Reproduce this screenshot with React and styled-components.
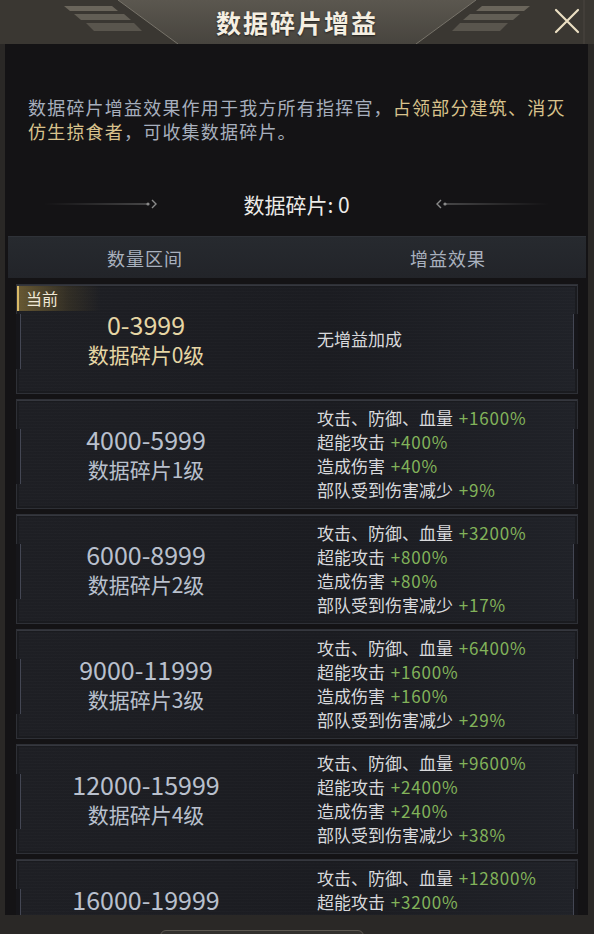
import styled, { createGlobalStyle } from "styled-components";

const GlobalStyle = createGlobalStyle`
  html, body {
    margin: 0;
    padding: 0;
    background: #141315;
  }
  body {
    font-family: "Noto Sans CJK SC", "Noto Sans", sans-serif;
  }
`;

const Panel = styled.div`
  width: 594px;
  height: 934px;
  display: flex;
  flex-direction: column;
  overflow: hidden;
  background: #141315;
`;

const Header = styled.div`
  position: relative;
  flex: none;
  height: 44px;
  box-sizing: border-box;
  display: flex;
  align-items: center;
  justify-content: center;
  background: linear-gradient(180deg, #403d37 0%, #34312d 100%);
  border-bottom: 1px solid #56524a;
`;

const HeaderArt = styled.svg`
  position: absolute;
  left: 0;
  top: 0;
`;

const Title = styled.h1`
  position: relative;
  margin: 0;
  font-size: 25px;
  font-weight: 700;
  letter-spacing: 2px;
  color: #f5efe2;
  text-shadow: 0 1px 2px rgba(0, 0, 0, 0.6);
`;

const Body = styled.div`
  flex: 1;
  min-height: 0;
  display: flex;
  flex-direction: column;
  border-left: 5px solid #2a2826;
  border-right: 6px solid #2a2826;
`;

const Description = styled.p`
  margin: 51px 0 0;
  padding: 0 6px 0 23px;
  font-size: 18px;
  line-height: 24px;
  letter-spacing: 1.2px;
  color: #a7afbd;
  white-space: nowrap;
  span {
    color: #d8c28c;
  }
`;

const Counter = styled.div`
  margin-top: 46px;
  height: 30px;
  display: flex;
  align-items: center;
  justify-content: center;
  gap: 84px;
`;

const CounterText = styled.div`
  font-size: 21px;
  color: #ecebe8;
  white-space: nowrap;
`;

const TableHeader = styled.div`
  margin: 17px 2px 0 3px;
  height: 42px;
  display: grid;
  grid-template-columns: 274px 1fr;
  align-items: center;
  background: linear-gradient(180deg, #272a2f, #222429);
  border-top: 1px solid #2f3238;
  box-sizing: border-box;
  color: #a9b1be;
  font-size: 18px;
  letter-spacing: 1px;
`;

const HeadCell = styled.div`
  text-align: center;
  padding-left: ${(p) => (p.$right ? "28px" : "0")};
`;

const List = styled.div`
  flex: 1;
  min-height: 0;
  overflow: hidden;
  padding: 6px 10px 0 11px;
  display: flex;
  flex-direction: column;
  gap: 5px;
`;

const Row = styled.div`
  position: relative;
  flex: none;
  height: 110px;
  box-sizing: border-box;
  display: grid;
  grid-template-columns: 258px 1fr;
  align-items: center;
  background:
    repeating-linear-gradient(180deg, rgba(255, 255, 255, 0.012) 0 1px, transparent 1px 3px),
    linear-gradient(90deg, #1e1f24 0%, #1b1c21 55%, #202228 100%);
  border: 1px solid #2e3036;
  box-shadow: inset 0 1px 0 #35373e, inset 0 0 0 2px #1a1b1f;

  &::before,
  &::after {
    content: "";
    position: absolute;
    top: 29px;
    height: 55px;
    width: 4px;
    background: #16161a;
  }
  &::before {
    left: -1px;
    border-right: 1px solid #444754;
  }
  &::after {
    right: -1px;
    border-left: 1px solid #444754;
  }
`;

const Badge = styled.div`
  position: absolute;
  left: 0;
  top: 1px;
  width: 84px;
  height: 25px;
  box-sizing: border-box;
  padding-left: 7px;
  border-left: 2px solid #d9b967;
  background: linear-gradient(90deg, rgba(150, 125, 60, 0.6), rgba(95, 80, 40, 0.3) 60%, transparent);
  color: #efe8d6;
  font-size: 16px;
  line-height: 25px;
  z-index: 1;
`;

const Level = styled.div`
  display: flex;
  flex-direction: column;
  align-items: center;
  color: ${(p) => (p.$current ? "#e6d6a5" : "#b9c0cd")};
`;

const Range = styled.div`
  font-size: 25px;
  line-height: 30px;
`;

const LevelName = styled.div`
  font-size: 21px;
  line-height: 30px;
`;

const Effects = styled.div`
  padding-left: 42px;
  font-size: 17px;
  line-height: 24px;
  color: #d8d9dc;
  white-space: nowrap;
`;

const Bonus = styled.span`
  margin-left: 2px;
  letter-spacing: 0.8px;
  color: #82b35a;
`;

const Footer = styled.div`
  flex: none;
  height: 19px;
  overflow: hidden;
  background: #2a2826;
  padding-left: 160px;
`;

const FooterButton = styled.div`
  margin-top: 15px;
  width: 204px;
  height: 40px;
  box-sizing: border-box;
  border: 1px solid #5c5851;
  border-radius: 6px;
  background: #33312e;
`;

const rows = [
  { range: "0-3999", name: "数据碎片0级", current: true, effects: null },
  { range: "4000-5999", name: "数据碎片1级", effects: ["+1600%", "+400%", "+40%", "+9%"] },
  { range: "6000-8999", name: "数据碎片2级", effects: ["+3200%", "+800%", "+80%", "+17%"] },
  { range: "9000-11999", name: "数据碎片3级", effects: ["+6400%", "+1600%", "+160%", "+29%"] },
  { range: "12000-15999", name: "数据碎片4级", effects: ["+9600%", "+2400%", "+240%", "+38%"] },
  { range: "16000-19999", name: "数据碎片5级", effects: ["+12800%", "+3200%", "+320%", "+47%"] },
];

const labels = ["攻击、防御、血量", "超能攻击", "造成伤害", "部队受到伤害减少"];

const Arrow = ({ flip }) => (
  <svg width="115" height="12" viewBox="0 0 115 12" style={flip ? { transform: "scaleX(-1)" } : undefined}>
    <defs>
      <linearGradient id={flip ? "lineR" : "lineL"} x1="0" x2="1" y1="0" y2="0">
        <stop offset="0" stopColor="#6a6a6a" stopOpacity="0" />
        <stop offset="1" stopColor="#7a7a7a" />
      </linearGradient>
    </defs>
    <rect x="0" y="5.5" width="104" height="1" fill={`url(#${flip ? "lineR" : "lineL"})`} />
    <circle cx="104" cy="6" r="1.6" fill="#8a8a8a" />
    <polyline points="108,2 112,6 108,10" fill="none" stroke="#8a8a8a" strokeWidth="1.4" />
  </svg>
);

const Stripes = () => (
  <g>
    <polygon points="64,6 112,6 118,11 70,11" fill="#6a655b" />
    <polygon points="74,14 124,14 131,20 81,20" fill="#625e55" />
    <polygon points="86,23 134,23 142,31 94,31" fill="#59554d" />
  </g>
);

export default function App() {
  return (
    <Panel>
      <GlobalStyle />
      <Header>
        <HeaderArt width="594" height="44" viewBox="0 0 594 44">
          <defs>
            <linearGradient id="plate" x1="0" x2="0" y1="0" y2="1">
              <stop offset="0" stopColor="#5b574f" />
              <stop offset="1" stopColor="#47443e" />
            </linearGradient>
          </defs>
          <rect x="0" y="0" width="594" height="44" fill="#3a3732" />
          <polygon points="118,0 476,0 416,44 178,44" fill="url(#plate)" />
          <line x1="118" y1="0" x2="178" y2="44" stroke="#77736a" strokeWidth="1" />
          <line x1="476" y1="0" x2="416" y2="44" stroke="#77736a" strokeWidth="1" />
          <Stripes />
          <g transform="translate(594,0) scale(-1,1)">
            <Stripes />
          </g>
          <line x1="584" y1="0" x2="584" y2="44" stroke="#4a4740" strokeWidth="1" />
          <path d="M556 10 L578 32 M578 10 L556 32" stroke="#ebdfc3" strokeWidth="2.2" strokeLinecap="round" />
        </HeaderArt>
        <Title>数据碎片增益</Title>
      </Header>
      <Body>
        <Description>
          数据碎片增益效果作用于我方所有指挥官，<span>占领部分建筑、消灭</span>
          <br />
          <span>仿生掠食者</span>，可收集数据碎片。
        </Description>
        <Counter>
          <Arrow />
          <CounterText>数据碎片: 0</CounterText>
          <Arrow flip />
        </Counter>
        <TableHeader>
          <HeadCell>数量区间</HeadCell>
          <HeadCell $right>增益效果</HeadCell>
        </TableHeader>
        <List>
          {rows.map((r) => (
            <Row key={r.range}>
              {r.current && <Badge>当前</Badge>}
              <Level $current={r.current}>
                <Range>{r.range}</Range>
                <LevelName>{r.name}</LevelName>
              </Level>
              <Effects>
                {r.effects
                  ? r.effects.map((v, i) => (
                      <div key={labels[i]}>
                        {labels[i]} <Bonus>{v}</Bonus>
                      </div>
                    ))
                  : <div>无增益加成</div>}
              </Effects>
            </Row>
          ))}
        </List>
      </Body>
      <Footer>
        <FooterButton />
      </Footer>
    </Panel>
  );
}
